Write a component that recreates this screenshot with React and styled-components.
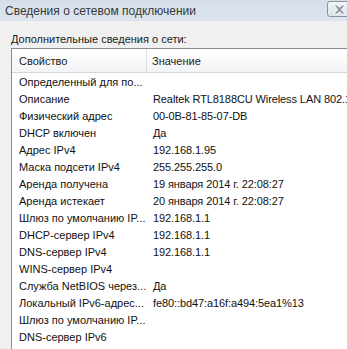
import styled, { createGlobalStyle } from "styled-components";

const GlobalStyle = createGlobalStyle`
  html, body {
    margin: 0;
    padding: 0;
    overflow: hidden;
    background: #f0f0f0;
  }
`;

const Window = styled.div`
  width: 347px;
  height: 349px;
  overflow: hidden;
  display: flex;
  flex-direction: column;
  background: #f0f0f0;
  font-family: "Liberation Sans", Arial, sans-serif;
`;

const TitleBar = styled.div`
  height: 21px;
  flex: none;
  display: flex;
  align-items: flex-start;
  justify-content: space-between;
  background: linear-gradient(#d5dfea, #dce5ef);
`;

const Title = styled.span`
  padding: 4px 0 0 5px;
  font-size: 12px;
  line-height: 14px;
  color: #383838;
`;

const CloseButton = styled.div`
  flex: none;
  width: 30px;
  height: 16px;
  margin-top: 1px;
  margin-right: -10px;
  box-sizing: border-box;
  border: 1px solid #8893a1;
  border-radius: 3px;
  background: linear-gradient(#f2f5f8, #dbe2ea);
  display: flex;
  align-items: center;
  padding-left: 5px;
`;

const Content = styled.div`
  flex: 1;
  display: flex;
  flex-direction: column;
  padding: 12px 0 0 11px;
  min-height: 0;
`;

const Caption = styled.div`
  font-size: 11px;
  line-height: 13px;
  color: #1a1a1a;
  margin-bottom: 2px;
`;

const ListBox = styled.div`
  flex: 1;
  width: 360px;
  background: #fff;
  border: 1px solid #878b92;
  border-right: none;
  border-bottom: none;
`;

const Grid = styled.div`
  display: grid;
  grid-template-columns: 135px 1fr;
`;

const Header = styled(Grid)`
  height: 24px;
  box-sizing: border-box;
  border-bottom: 1px solid #d5d5d5;
  background: linear-gradient(#ffffff, #f3f4f6);
`;

const HeaderCell = styled.div`
  padding: 1px 0 0 ${({ $pad }) => $pad}px;
  font-size: 11px;
  line-height: 22px;
  color: #1a1a1a;
  border-right: ${({ $divider }) => ($divider ? "1px solid #dedfe1" : "none")};
`;

const Rows = styled.div`
  padding-top: 1px;
`;

const Row = styled(Grid)`
  height: 17px;
`;

const Cell = styled.div`
  padding-left: ${({ $pad }) => $pad}px;
  font-size: 11px;
  line-height: 17px;
  color: #111;
  white-space: nowrap;
  overflow: hidden;
  letter-spacing: ${({ $tight }) => ($tight ? "-0.1px" : "0")};
`;

const CloseIcon = () => (
  <svg width="13" height="11" viewBox="0 0 13 11">
    <path
      d="M1 1 L4 1 L6.5 3.6 L9 1 L12 1 L8.2 5.5 L12 10 L9 10 L6.5 7.4 L4 10 L1 10 L4.8 5.5 Z"
      fill="#8a929c"
      stroke="#ffffff"
      strokeWidth="0.8"
      strokeLinejoin="round"
    />
  </svg>
);

const rows = [
  ["Определенный для по...", ""],
  ["Описание", "Realtek RTL8188CU Wireless LAN 802.11n USB 2.0 Network Adapter"],
  ["Физический адрес", "00-0B-81-85-07-DB"],
  ["DHCP включен", "Да"],
  ["Адрес IPv4", "192.168.1.95"],
  ["Маска подсети IPv4", "255.255.255.0"],
  ["Аренда получена", "19 января 2014 г. 22:08:27"],
  ["Аренда истекает", "20 января 2014 г. 22:08:27"],
  ["Шлюз по умолчанию IP...", "192.168.1.1"],
  ["DHCP-сервер IPv4", "192.168.1.1"],
  ["DNS-сервер IPv4", "192.168.1.1"],
  ["WINS-сервер IPv4", ""],
  ["Служба NetBIOS через...", "Да"],
  ["Локальный IPv6-адрес...", "fe80::bd47:a16f:a494:5ea1%13"],
  ["Шлюз по умолчанию IP...", ""],
  ["DNS-сервер IPv6", ""],
];

export default function App() {
  return (
    <>
      <GlobalStyle />
      <Window>
        <TitleBar>
          <Title>Сведения о сетевом подключении</Title>
          <CloseButton>
            <CloseIcon />
          </CloseButton>
        </TitleBar>
        <Content>
          <Caption>Дополнительные сведения о сети:</Caption>
          <ListBox>
            <Header>
              <HeaderCell $pad={7} $divider>Свойство</HeaderCell>
              <HeaderCell $pad={5}>Значение</HeaderCell>
            </Header>
            <Rows>
              {rows.map(([name, value], i) => (
                <Row key={i}>
                  <Cell $pad={7}>{name}</Cell>
                  <Cell $pad={6} $tight>{value}</Cell>
                </Row>
              ))}
            </Rows>
          </ListBox>
        </Content>
      </Window>
    </>
  );
}
